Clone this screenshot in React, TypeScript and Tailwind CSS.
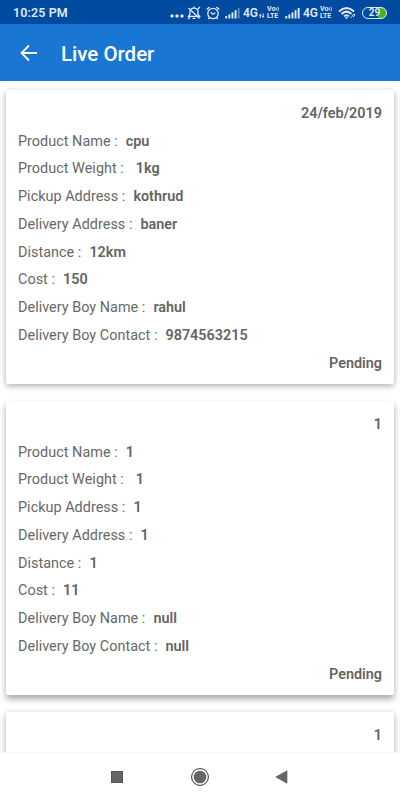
import React from "react";

type Row = { label: string; value: string; wide?: boolean };
type Order = { date: string; rows: Row[]; status?: string };

const makeRows = (v: string[]): Row[] => [
  { label: "Product Name :", value: v[0] },
  { label: "Product Weight :", value: v[1], wide: true },
  { label: "Pickup Address :", value: v[2] },
  { label: "Delivery Address :", value: v[3] },
  { label: "Distance :", value: v[4] },
  { label: "Cost :", value: v[5] },
  { label: "Delivery Boy Name :", value: v[6] },
  { label: "Delivery Boy Contact :", value: v[7] },
];

const orders: Order[] = [
  { date: "24/feb/2019", rows: makeRows(["cpu", "1kg", "kothrud", "baner", "12km", "150", "rahul", "9874563215"]), status: "Pending" },
  { date: "1", rows: makeRows(["1", "1", "1", "1", "1", "11", "null", "null"]), status: "Pending" },
  { date: "1", rows: [] },
];

function Signal({ faded }: { faded?: boolean }) {
  return (
    <svg width="15" height="12" viewBox="0 0 15 12" fill="#dfe9f8">
      <rect x="0.3" y="9" width="1.9" height="2.5" />
      <rect x="3.4" y="7.4" width="1.9" height="4.1" />
      <rect x="6.5" y="5.4" width="1.9" height="6.1" />
      <rect x="9.6" y="3.2" width="1.9" height="8.3" />
      <rect x="12.7" y="1" width="1.9" height="10.5" opacity={faded ? 0.4 : 1} />
    </svg>
  );
}

function Volte() {
  return (
    <div className="flex w-[13px] flex-col text-[7px] font-bold">
      <span className="flex h-[6.5px] items-center leading-[6.5px]">
        Vo
        <svg width="5" height="6" viewBox="0 0 5 6" fill="none" stroke="#dfe9f8" strokeWidth="1">
          <path d="M1 1.5Q2 3 1 4.5M3 0.6Q4.6 3 3 5.4" />
        </svg>
      </span>
      <span className="h-[6.5px] leading-[6.5px]">LTE</span>
    </div>
  );
}

function StatusBar() {
  return (
    <header className="flex h-6 shrink-0 items-center bg-[#004a9f] pt-px pl-[13px] text-[#dfe9f8]">
      <span className="w-[157px] text-[12.5px] leading-4 font-semibold tracking-[0.1px]">10:25 PM</span>
      <svg width="14" height="14" viewBox="0 0 14 14" fill="#dfe9f8">
        <circle cx="2" cy="10" r="1.7" />
        <circle cx="7" cy="10" r="1.7" />
        <circle cx="12" cy="10" r="1.7" />
      </svg>
      <svg className="ml-[3px]" width="14" height="14" viewBox="0 0 14 14" fill="none" stroke="#dfe9f8">
        <path d="M1.5 10.3H12.5L11 8.5V5.5C11 3.3 9.3 2.2 7 2.2S3 3.3 3 5.5V8.5ZM5.5 12.4H8.5M7 .6V2.2" strokeWidth="1.3" />
        <path d="M1.5 2L12.5 12.5" strokeWidth="1.3" />
        <path d="M10.5 3.5L13 1M1 13L3.2 10.8" strokeWidth="1.3" />
      </svg>
      <svg className="ml-[5px]" width="14" height="14" viewBox="0 0 14 14" fill="none" stroke="#dfe9f8" strokeWidth="1.3">
        <circle cx="7" cy="7.5" r="5.2" />
        <path d="M4.6 6.2L7 8.3L9.5 6.8M.6 3.4L3.6 .9M13.4 3.4L10.4 .9M3.4 11.6L2.3 13M10.6 11.6L11.7 13" />
      </svg>
      <span className="ml-[5px]"><Signal faded /></span>
      <span className="ml-[3px] w-[15px] text-[12px] leading-4 font-semibold">4G</span>
      <svg className="ml-px" width="6" height="12" viewBox="0 0 6 12" fill="#dfe9f8">
        <path d="M0 8.5L1.3 6.5L2.6 8.5H1.8V11H.8V8.5ZM3.6 6.5H4.6V9H5.4L4.1 11L2.8 9H3.6Z" />
      </svg>
      <span className="ml-[2px]"><Volte /></span>
      <span className="ml-[5px]"><Signal /></span>
      <span className="ml-[3px] w-[15px] text-[12px] leading-4 font-semibold">4G</span>
      <span className="ml-[2px]"><Volte /></span>
      <svg className="ml-[5px]" width="18" height="14" viewBox="0 0 18 14" fill="none" stroke="#dfe9f8">
        <path d="M1 5.4Q8.5-1.4 16 5.4M3.5 8Q8.5 3.2 13.5 8M6 10.4Q8.5 8 11 10.4" strokeWidth="2" />
        <path d="M6.8 11.2L8.5 13.2L10.2 11.2Z" fill="#dfe9f8" stroke="none" />
        <path d="M12.5 12L14 10.4M14 9.8L16 8L17 9L15 11" strokeWidth="1" />
      </svg>
      <div className="ml-[6px] flex h-[12px] w-[25px] items-center justify-center rounded-full border border-[#dfe9f8] bg-linear-to-r from-transparent from-65% to-[#42b620] to-65% text-[10px] leading-none font-bold">
        29
      </div>
    </header>
  );
}

function OrderCard({ order }: { order: Order }) {
  return (
    <article className="h-[294px] shrink-0 rounded-[2px] bg-white px-3 pt-[9.9px] shadow-[0_2px_6px_rgba(0,0,0,0.32)] last:h-[60px] nth-2:shadow-[0_4px_6px_rgba(0,0,0,0.34)]">
      <p className="h-[27.75px] text-right leading-[27.75px] font-semibold text-[#646464]">{order.date}</p>
      {order.rows.map((r) => (
        <p key={r.label} className="flex h-[27.75px] leading-[27.75px] whitespace-pre">
          <span className="tracking-[0.03px] text-[#686868]">{r.label}</span>
          <span className={`${r.wide ? "ml-[12px]" : "ml-[8px]"} font-semibold text-[#646464]`}>{r.value}</span>
        </p>
      ))}
      {order.status && <p className="text-right leading-[27.75px] font-semibold text-[#646464]">{order.status}</p>}
    </article>
  );
}

export default function App() {
  return (
    <div className="flex h-[800px] w-[400px] flex-col overflow-hidden bg-white font-[Roboto,sans-serif]">
      <StatusBar />
      <div className="flex h-[57px] shrink-0 items-center bg-[#1976d2] pl-[20px] text-white">
        <svg width="18" height="18" viewBox="0 0 18 18" fill="none" stroke="white" strokeWidth="1.8">
          <path d="M17 9H2M9 1.5L1.5 9L9 16.5" />
        </svg>
        <h1 className="ml-[23px] pt-[3px] text-[20.5px] leading-6 font-medium">Live Order</h1>
      </div>
      <main className="flex h-[671px] shrink-0 flex-col gap-[17px] overflow-hidden px-[6px] pt-[9px] text-[14.4px]">
        {orders.map((o, i) => (
          <OrderCard key={i} order={o} />
        ))}
      </main>
      <nav className="flex h-12 shrink-0 items-center border-t border-[#f7f7f7] bg-white pl-[111px]">
        <svg width="12" height="12" viewBox="0 0 12 12">
          <rect x=".5" y=".5" width="11" height="11" fill="#666" stroke="#555" />
        </svg>
        <svg className="ml-[68px]" width="18" height="18" viewBox="0 0 18 18">
          <circle cx="9" cy="9" r="8.4" fill="none" stroke="#333" />
          <circle cx="9" cy="9" r="6.3" fill="#666" />
        </svg>
        <svg className="ml-[66px]" width="13" height="14" viewBox="0 0 13 14">
          <path d="M.8 7L12 .8V13.2Z" fill="#666" stroke="#555" strokeWidth=".6" />
        </svg>
      </nav>
    </div>
  );
}
